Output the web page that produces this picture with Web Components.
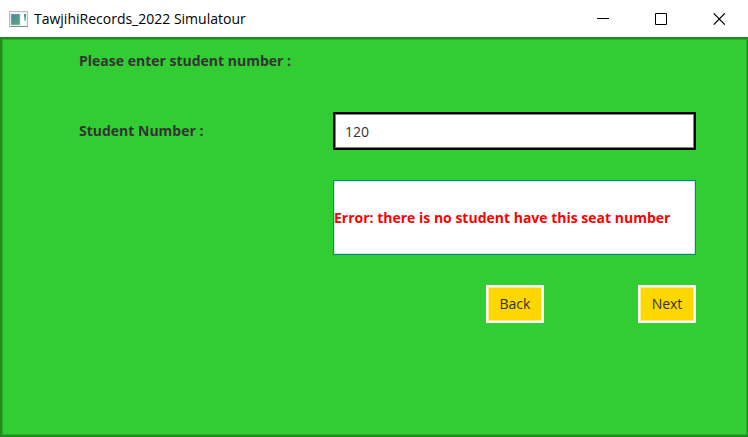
<!DOCTYPE html>
<html lang="en">
<head>
<meta charset="utf-8">
<title>TawjihiRecords_2022 Simulatour</title>
<style>
  html, body { height: 100%; margin: 0; }
  body { font-family: "Open Sans", "Noto Sans", sans-serif; font-size: 14px; line-height: 20px; color: #333; background: #fff; }
</style>
</head>
<body>
<app-window>
  <title-bar slot="title">TawjihiRecords_2022 Simulatour</title-bar>
  <student-form></student-form>
</app-window>

<script>
class AppWindow extends HTMLElement {
  constructor() {
    super();
    this.attachShadow({ mode: "open" }).innerHTML = `
      <style>
        :host { display: flex; flex-direction: column; min-height: 100vh; }
        main { flex: 1; box-sizing: border-box; background: #32cd32; border: solid #228b22; border-width: 2px 1px 2px 2px; box-shadow: inset 0 0 0 1px #2aac2a; overflow: hidden; }
      </style>
      <slot name="title"></slot>
      <main><slot></slot></main>`;
  }
}
class TitleBar extends HTMLElement {
  constructor() {
    super();
    this.attachShadow({ mode: "open" }).innerHTML = `
      <style>
        :host { display: flex; align-items: center; height: 37px; color: #000; background: #fff; }
        .icon { width: 19px; height: 16px; margin: 0 6px 0 9px; }
        h1 { flex: 1; margin: 0; font-size: 14px; line-height: 20px; font-weight: 400; white-space: nowrap; }
        button { width: 58px; height: 37px; padding: 0; border: 0; background: none; display: grid; place-items: center; }
        button svg { width: 12px; height: 12px; fill: none; stroke: #000; }
      </style>
      <svg class="icon" viewBox="0 0 19 16" aria-hidden="true">
        <defs>
          <linearGradient id="pane" x1="0" y1="0" x2="1" y2="1"><stop offset="0" stop-color="#4a7fa8"/><stop offset="1" stop-color="#59b07c"/></linearGradient>
          <linearGradient id="bar" x1="0" y1="0" x2="0" y2="1"><stop offset="0" stop-color="#3d80a5"/><stop offset="1" stop-color="#a5dcc0"/></linearGradient>
        </defs>
        <rect x=".5" y=".5" width="18" height="15" fill="#f5f6f8" stroke="#b4bac1"/>
        <path d="M1 15.500h17.500" stroke="#858c94"/>
        <rect x="2" y="3" width="9" height="11" fill="url(#pane)" stroke="#c8d4da" stroke-width=".5"/>
        <rect x="12" y="3" width="5" height="11" fill="#fff"/>
        <rect x="15" y="3" width="2" height="7" fill="url(#bar)"/>
      </svg>
      <h1><slot></slot></h1>
      <button type="button" aria-label="Minimize"><svg viewBox="0 0 12 12"><path d="M0 5.500h12"/></svg></button>
      <button type="button" aria-label="Maximize"><svg viewBox="0 0 12 12"><path d="M.5 .5h11v11h-11z"/></svg></button>
      <button type="button" aria-label="Close"><svg viewBox="0 0 12 12"><path d="M.7 .3l11.100 11.400M11.800 .3l-11.100 11.400" stroke-width="1.100"/></svg></button>`;
  }
}
class FormButton extends HTMLElement {
  constructor() {
    super();
    this.attachShadow({ mode: "open" }).innerHTML = `
      <style>
        :host { display: block; }
        button { box-sizing: border-box; min-width: 58px; height: 38px; padding: 0 10px; font: inherit; color: #333; background: #ffd700; border: 2px solid #fff; box-shadow: inset 0 0 0 1px #ffeb80; }
      </style>
      <button type="button"><slot></slot></button>`;
  }
}
class StudentForm extends HTMLElement {
  constructor() {
    super();
    this.attachShadow({ mode: "open" }).innerHTML = `
      <style>
        :host { display: block; }
        form { display: grid; grid-template-columns: 254px 1fr; row-gap: 30px; padding: 1px 51px 30px 77px; }
        h2 { grid-column: 1 / -1; margin: 0; height: 42px; font-size: 14px; line-height: 42px; font-weight: 700; }
        label { font-weight: 700; align-self: center; }
        input { box-sizing: border-box; width: 100%; height: 38px; padding: 0 10px; font: inherit; color: #333; background: #fff; border: 2px solid #000; border-radius: 0; outline: none; box-shadow: inset 0 0 0 1px #808080; }
        output { grid-column: 2; display: flex; align-items: center; box-sizing: border-box; min-height: 75px; font-weight: 700; color: #f00; background: #fff; border: 1px solid #008b8b; box-shadow: inset 0 0 0 1px #c8e6e6; }
        nav { grid-column: 2; display: flex; justify-content: flex-end; gap: 94px; }
      </style>
      <form>
        <h2>Please enter student number :</h2>
        <label for="number">Student Number :</label>
        <input id="number" type="text" inputmode="numeric" value="120">
        <output for="number">Error: there is no student have this seat number</output>
        <nav><form-button>Back</form-button><form-button>Next</form-button></nav>
      </form>`;
  }
}
customElements.define("app-window", AppWindow);
customElements.define("title-bar", TitleBar);
customElements.define("form-button", FormButton);
customElements.define("student-form", StudentForm);
</script>
</body>
</html>
